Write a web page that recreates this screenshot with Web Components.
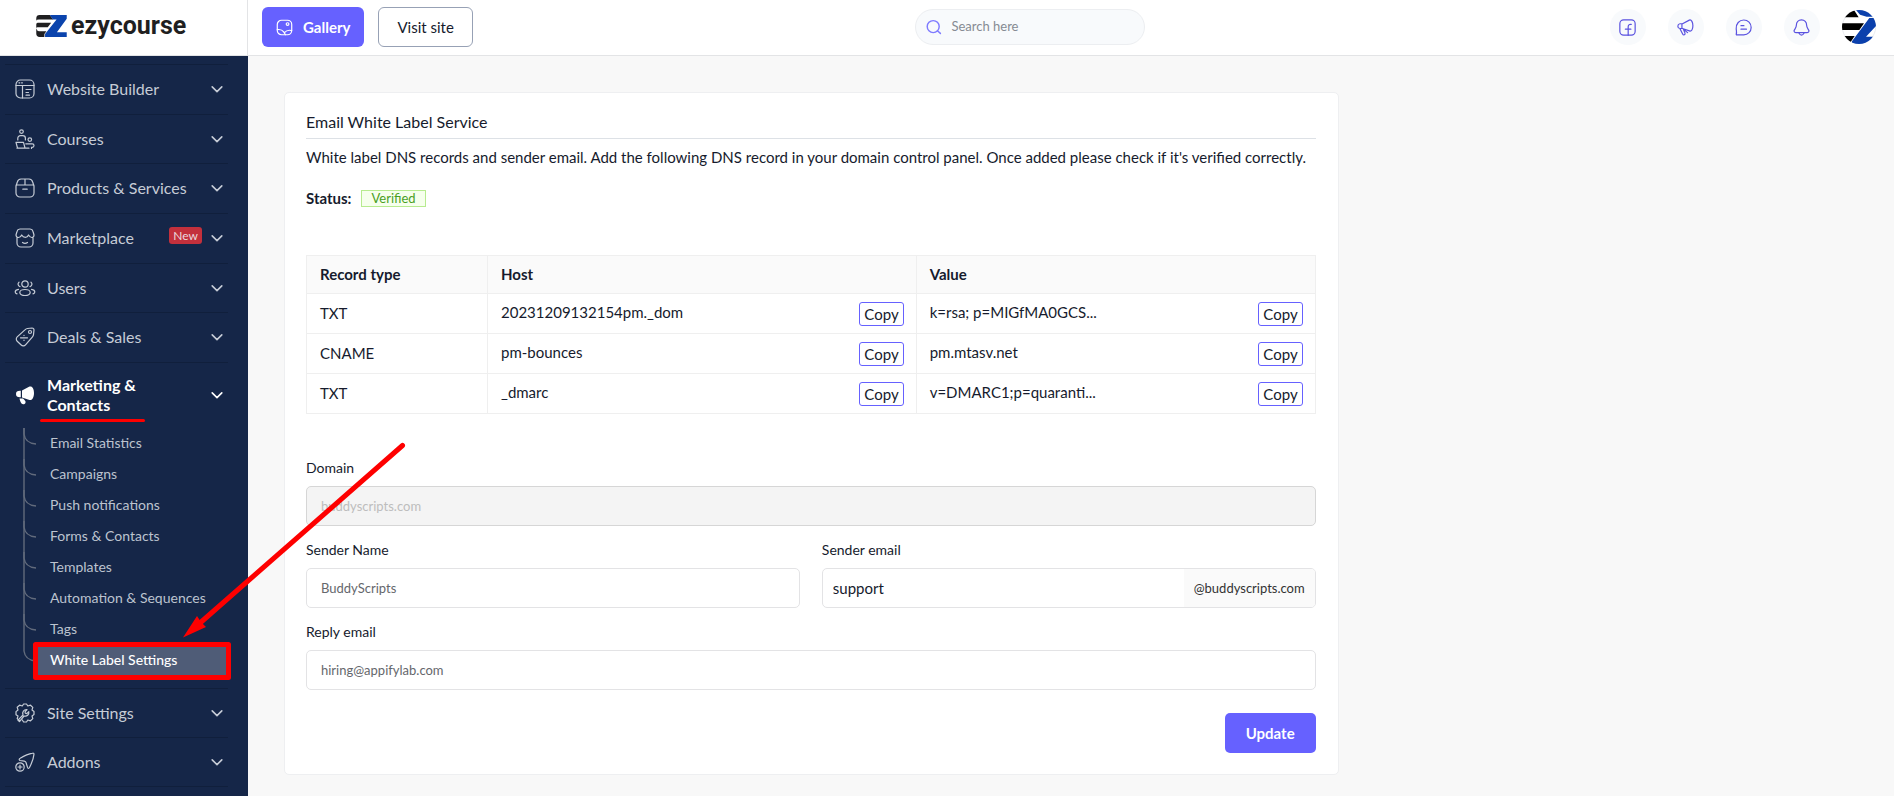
<!DOCTYPE html>
<html lang="en">
<head>
<meta charset="utf-8">
<meta name="viewport" content="width=device-width, initial-scale=1">
<title>Email White Label Service</title>
<style>
  body { margin: 0; font-family: Lato, "Noto Sans", sans-serif; font-size: 15px; line-height: 24px; color: #161b2d; background: #f8f8f8; }
</style>
</head>
<body>
<app-shell>
  <top-bar slot="header"></top-bar>
  <side-nav slot="nav">
    <nav-item slot="top" icon="layout">Website Builder</nav-item>
    <nav-item slot="top" icon="courses">Courses</nav-item>
    <nav-item slot="top" icon="box">Products &amp; Services</nav-item>
    <nav-item slot="top" icon="store" badge="New">Marketplace</nav-item>
    <nav-item slot="top" icon="users">Users</nav-item>
    <nav-item slot="top" icon="tag">Deals &amp; Sales</nav-item>
    <nav-item icon="megaphone" open>Marketing &amp; Contacts
      <sub-link slot="sub">Email Statistics</sub-link>
      <sub-link slot="sub">Campaigns</sub-link>
      <sub-link slot="sub">Push notifications</sub-link>
      <sub-link slot="sub">Forms &amp; Contacts</sub-link>
      <sub-link slot="sub">Templates</sub-link>
      <sub-link slot="sub">Automation &amp; Sequences</sub-link>
      <sub-link slot="sub">Tags</sub-link>
      <sub-link slot="sub" current>White Label Settings</sub-link>
    </nav-item>
    <nav-item icon="gear">Site Settings</nav-item>
    <nav-item icon="addon">Addons</nav-item>
  </side-nav>
  <settings-card>
    <span slot="title">Email White Label Service</span>
    <span slot="intro">White label DNS records and sender email. Add the following DNS record in your domain control panel. Once added please check if it's verified correctly.</span>
    <dns-table></dns-table>
    <sender-form></sender-form>
  </settings-card>
  <tour-marks slot="marks"></tour-marks>
</app-shell>

<script>
const ICONS = {
  layout: '<rect x="1" y="1" width="18" height="18" rx="4.5"/><path d="M1 6.500h18M7.500 6.500V19M11 10.500h5M11 13.500h2.500M11 16.200h3.500M4 3.800h.8M6.600 3.800h.8"/>',
  courses: '<circle cx="6.500" cy="2.600" r="1.800"/><path d="M2.800 11V9.200A2.600 2.600 0 0 1 5.400 6.600h2.400A2.600 2.600 0 0 1 10.400 9.200V11"/><path d="M2.500 19 1 13.400h7.500L10 19M2 19.200h12"/><circle cx="14.800" cy="10.600" r="1.800"/><path d="M10.800 14.800h6.400a1.800 1.800 0 0 1 0 3.600h-.7v1"/>',
  box: '<path d="M1 8.200 2.300 4A4 4 0 0 1 6 1h8a4 4 0 0 1 3.700 3L19 8.200V15a4 4 0 0 1-4 4H5a4 4 0 0 1-4-4zM1 7h18M10 1v6M7.800 11.200h4.400"/>',
  store: '<path d="M2 9v6a4 4 0 0 0 4 4h8a4 4 0 0 0 4-4V9M1 7l1-3.500A3.300 3.300 0 0 1 5 1h10a3.300 3.300 0 0 1 3 2.500L19 7c0 1.500-.8 2.500-2.200 2.500S14.500 8.500 13.500 7c-.5 1.600-1.500 2.300-3 2.300S7.500 8.500 6.700 7C6 8.700 5 9.500 3.600 9.500S1 8.500 1 7zM7.500 14.500q2.500 1.600 5 0"/>',
  users: '<circle cx="10" cy="6" r="3.200"/><ellipse cx="10" cy="14.500" rx="5.200" ry="3"/><path d="M5 8.600A2.500 2.500 0 0 1 4 4.200M15 8.600a2.500 2.500 0 0 0 1-4.400M3.500 11.300C1.500 11.600.2 12.600.2 13.900c0 .9.700 1.600 1.800 2M16.500 11.300c2 .3 3.300 1.300 3.300 2.600 0 .9-.7 1.600-1.800 2"/>',
  tag: '<path d="M12.500 1.500 17 1a2 2 0 0 1 2 2l-.5 4.600a4 4 0 0 1-1 2.200l-7 8a3 3 0 0 1-4.300.2l-4-3.800a3 3 0 0 1 0-4.300l8-7.300a4 4 0 0 1 2.300-1.100z"/><circle cx="15" cy="5" r="1.500"/><path d="M5.500 10.800h7M9 8.300v.3M9 13.200v.3"/>',
  megaphone: '<g fill="currentColor" stroke="none"><path d="M7 5.600 14.500 1.600C16.800.6 19 3.200 19 8s-2.200 8-4.500 6.900L7 12.400z"/><path d="M5.800 5.700C2.500 5.500 1 6.500 1 9s1.500 3.400 4.800 3.200zM4.500 13.500h3.600l2 2.200c.8 1 .6 2.300-.3 3-1 .8-2.500.7-3.300-.3-1.200-1.500-1.600-3-2-4.900z"/></g>',
  gear: '<path d="M4.500 17.800 2.200 15.600 3 13 1 11.700V8.600L3 7 2.200 4.300 4.600 2.200 7.300 3 8.600 1h2.900l1.300 2 2.700-.8 2.300 2.200L17 7l2 1.500v3.100L17 13l.8 2.600-2.300 2.200-2.700-.8-1.300 2H8.600L7.300 17"/><path d="M4.500 18.600 3 17.200l5-5.200c-1-2.800.7-5.600 4-5.300l-2 2.200.4 1.300 1.400.4 2-2c.6 3.200-2 5.200-4.800 4.400z"/>',
  addon: '<circle cx="5" cy="15" r="4.200"/><path d="M5 13v4M3 15h4M5 8.500c-1.200-.7-1-1.600.2-2.200C9 4 13 2 17.600 1.200c1-.2 1.500.4 1.300 1.400C18.500 7 16.500 11.500 14.500 15.500c-.7 1.200-1.600 1-2-.1L11 10.500c-.3-.9-.8-1.200-1.700-1.400z"/>',
  chevron: '<path d="m4 7.300 6 6 6-6"/>',
  gallery: '<rect x="1.500" y="1.500" width="17" height="17" rx="5"/><circle cx="13.600" cy="6" r="1.600"/><path d="M1.500 12.500c3.500-.6 6 .4 7.600 2.700l2 3.300M10 16c2-2.600 4.600-3.300 8.500-2.400"/>',
  search: '<circle cx="9" cy="9.500" r="7.500"/><path d="m14.600 15 3.400 3"/>',
  facebook: '<rect x="1" y="1" width="18" height="18" rx="4.500"/><path d="M10.800 19V9.500c0-2.400 1-3.400 3.600-3.200M7.500 12h6.500"/>',
  horn: '<path d="M6.500 5.500 14.500 1.300C17 .4 18.700 4 18.700 8s-1.700 7.200-4.200 6L6.500 11.200M5.800 5.600H3.400Q1 6 1 8.400t2.400 2.800h2.400zM3.500 11.500 6.800 18c.8 1.400 3.200.6 2.600-1.400L7.500 12l5 4"/>',
  chat: '<path d="M2.500 18.500c-.8.400-1.300 0-1-.9.700-2 .1-3.800-.1-6C1 5.500 5 1.200 10.300 1.200c5 0 8.700 3.800 8.700 8.700s-3.700 8.700-8.700 8.700H3.500zM7 7.800h3.500M7 12h6.500"/>',
  bell: '<path d="M10 1C6.300 1 4 3.700 4 7.200c0 4-2.800 4.800-2.800 7C1.200 15.600 2 16 3.300 16h13.400c1.300 0 2.100-.4 2.100-1.800 0-2.200-2.800-3-2.800-7C16 3.700 13.700 1 10 1zM6.800 16.500q3.200 5 6.400 0"/>'
};

function define(name, html, setup) {
  const template = document.createElement('template');
  template.innerHTML = html;
  customElements.define(name, class extends HTMLElement {
    connectedCallback() {
      if (this.shadowRoot) return;
      const content = template.content.cloneNode(true);
      if (setup) setup(this, content);
      this.attachShadow({ mode: 'open' }).append(content);
    }
  });
}

define('ui-icon', `
<style>
  :host { display: block; flex: none; width: var(--size, 20px); height: var(--size, 20px); }
  svg { display: block; width: 100%; height: 100%; overflow: visible; fill: none; stroke: currentColor; stroke-width: var(--stroke, 1.2); stroke-linecap: round; stroke-linejoin: round; }
</style>
<svg viewBox="0 0 20 20" aria-hidden="true"></svg>`,
(el, root) => { root.querySelector('svg').innerHTML = ICONS[el.getAttribute('name')]; });

define('app-shell', `
<style>
  :host { display: grid; position: relative; grid-template: auto 1fr / 248px minmax(0, 1fr); min-height: 100vh; }
  header { grid-column: 1 / -1; }
  aside { display: grid; background: #152648; }
  main { display: grid; grid-template-columns: minmax(0, 2fr) minmax(0, 1fr); align-items: start; padding: 36px 28px 21px 36px; }
</style>
<header><slot name="header"></slot></header>
<aside><slot name="nav"></slot></aside>
<main><slot></slot></main>
<slot name="marks"></slot>`);

define('brand-logo', `
<style>
  :host { display: block; }
  a { display: flex; align-items: center; gap: 4px; color: #1f1f21; font: 700 25px/32px Roboto, sans-serif; text-decoration: none; }
  svg { width: 31px; height: 22px; }
</style>
<a href="#">
  <svg viewBox="0 0 90 65" aria-hidden="true">
    <path fill="#1f1f21" d="M0 10Q0 0 10 0h30l10 13H8q-8 0-8 4zM4 23h40l-10 13H4q-4 0-4 4V28q0-5 4-5zM0 40q2 8 10 8h20l-6 8v9H10Q0 65 0 55z"/>
    <path fill="#0b44ad" d="M40 0h50v11L61 51h29v14H26v-9l34-43H49z"/>
  </svg>
  <span>ezycourse</span>
</a>`);

define('top-bar', `
<style>
  :host { display: flex; box-sizing: border-box; height: 56px; background: #fff; border-bottom: 1px solid #e3e4e6; }
  brand-logo { box-sizing: border-box; width: 248px; padding: 10px 0 0 36px; border-right: 1px solid #e3e4e6; }
  .tools { flex: 1; display: flex; align-items: center; padding: 0 18px 1px 14px; }
  .left { display: flex; gap: 14px; }
  button { font: inherit; cursor: pointer; }
  .gallery, .visit { box-sizing: border-box; display: flex; align-items: center; height: 40px; padding-bottom: 2px; border-radius: 6px; font-size: 15px; }
  .gallery { gap: 10px; padding: 0 14px; color: #fff; font-weight: 700; background: #6661ff; border: 0; --size: 17px; --stroke: 1.4; }
  .visit { padding: 0 18px; color: #161b2d; border: 1px solid #97a1b5; text-decoration: none; }
  .search { box-sizing: border-box; display: flex; align-items: center; gap: 9px; width: 230px; height: 36px; margin: 0 auto; padding: 0 10px; background: #f8fafc; border: 1px solid #eceef1; border-radius: 18px; color: #7f7bff; --size: 16px; --stroke: 1.8; }
  input { flex: 1; min-width: 0; padding: 0 0 2px; border: 0; background: none; font: 13px/20px Lato, sans-serif; color: #161b2d; outline: 0; }
  input::placeholder { color: #868b93; opacity: 1; }
  .right { display: flex; align-items: center; gap: 22px; padding-left: 22px; }
  .round { display: grid; place-items: center; width: 36px; height: 36px; padding: 0; border: 0; border-radius: 50%; background: #f8fafc; color: #5a52e0; --size: 17px; --stroke: 1.4; }
  .avatar { width: 34px; height: 34px; padding: 0; border: 0; background: none; }
  .avatar svg { display: block; }
</style>
<brand-logo></brand-logo>
<div class="tools">
  <div class="left">
    <button class="gallery"><ui-icon name="gallery"></ui-icon>Gallery</button>
    <a class="visit" href="#">Visit site</a>
  </div>
  <label class="search"><ui-icon name="search"></ui-icon><input type="search" placeholder="Search here" aria-label="Search"></label>
  <div class="right">
    <button class="round" aria-label="Facebook"><ui-icon name="facebook"></ui-icon></button>
    <button class="round" aria-label="Announcements"><ui-icon name="horn"></ui-icon></button>
    <button class="round" aria-label="Messages"><ui-icon name="chat"></ui-icon></button>
    <button class="round" aria-label="Notifications"><ui-icon name="bell"></ui-icon></button>
    <button class="avatar" aria-label="Account">
      <svg width="34" height="34" viewBox="0 0 102 102">
        <clipPath id="c"><circle cx="51" cy="51" r="51"/></clipPath>
        <circle cx="51" cy="51" r="50" fill="#fff" stroke="#dfe3ea" stroke-width="2"/>
        <g clip-path="url(#c)">
          <path d="M0 0h36l14 22H0zM0 40h66L52 60H0zM0 78h38L26 96v6H0z"/>
          <path fill="#0b40ac" d="M42 0h60v20H74L54 14zM82 24h20v24L72 80h30v22H30V94z"/>
        </g>
      </svg>
    </button>
  </div>
</div>`);

define('side-nav', `
<style>
  :host { display: block; padding: 8px 20px 0 5px; }
  .top { display: grid; grid-auto-rows: 1fr; height: 298px; }
  .end { border-bottom: 1px solid #101f3c; }
</style>
<nav>
  <div class="top"><slot name="top"></slot></div>
  <div class="end"><slot></slot></div>
</nav>`);

define('nav-item', `
<style>
  :host { display: block; box-sizing: border-box; min-height: 49px; border-top: 1px solid #101f3c; color: #c6ccd6; }
  button { box-sizing: border-box; display: flex; align-items: center; width: 100%; min-height: 48px; padding: 0 3px 0 10px; border: 0; background: none; color: inherit; font: 16px/20px Lato, sans-serif; text-align: left; cursor: pointer; --stroke: 1.2; }
  .text { flex: 1; margin-left: 12px; }
  .badge { margin: -6px 7px 0 0; padding: 0 4px; border-radius: 3px; background: #c3303c; color: #ead9de; font-size: 12px; line-height: 17px; }
  .chev { --size: 16px; --stroke: 2; }
  ul { margin: 0; padding: 0 2px 12px 13px; list-style: none; display: none; }
  :host([open]) { color: #fff; font-weight: 700; }
  :host([open]) button { min-height: 65px; padding-bottom: 2px; font-weight: 700; }
  :host([open]) .text { padding-right: 60px; }
  :host([open]) ul { display: block; }
</style>
<button><ui-icon class="icon"></ui-icon><span class="text"><slot></slot></span><ui-icon class="chev" name="chevron"></ui-icon></button>
<ul><slot name="sub"></slot></ul>`,
(el, root) => {
  root.querySelector('.icon').setAttribute('name', el.getAttribute('icon'));
  if (el.hasAttribute('badge')) {
    const badge = document.createElement('span');
    badge.className = 'badge';
    badge.textContent = el.getAttribute('badge');
    root.querySelector('.chev').before(badge);
  }
});

define('sub-link', `
<style>
  :host { display: flex; height: 31px; }
  svg { flex: none; width: 20px; height: 31px; fill: none; stroke: #626b7c; stroke-width: 1.4; overflow: visible; }
  a { flex: 1; padding-left: 12px; color: #bcc3cf; font-size: 14px; font-weight: 400; line-height: 30px; text-decoration: none; }
  :host([current]) a { color: #fff; background: #4f5c77; font-weight: 500; }
  :host([current]) .through { display: none; }
</style>
<svg viewBox="0 0 20 31" aria-hidden="true"><path class="through" d="M6 0v31"/><path d="M6 0v6q1 9 12 10"/></svg>
<a href="#"><slot></slot></a>`,
(el) => { el.setAttribute('role', 'listitem'); });

define('settings-card', `
<style>
  :host { display: block; padding: 17px 22px 21px 21px; background: #fff; border: 1px solid #eeeff1; border-radius: 5px; }
  h1 { margin: 0; padding-bottom: 4px; border-bottom: 1px solid #dde1e6; font-size: 16px; font-weight: 400; line-height: 24px; }
  p { margin: 6px 0 17px; }
  .status { display: flex; align-items: center; gap: 10px; margin-bottom: 45px; }
  .verified { padding: 0 9px; border: 1px solid #b7eb8f; background: #f6ffed; color: #4aa01f; font-size: 13px; line-height: 15px; }
</style>
<h1><slot name="title"></slot></h1>
<p><slot name="intro"></slot></p>
<div class="status"><strong>Status:</strong><span class="verified">Verified</span></div>
<slot></slot>`);

define('dns-table', `
<style>
  :host { display: block; }
  table { width: 100%; table-layout: fixed; border-collapse: collapse; }
  th, td { box-sizing: border-box; height: 40px; padding: 0 12px 2px 13px; border: 1px solid #efefef; text-align: left; font-weight: 400; }
  th { height: 38px; background: #fafafa; font-weight: 700; }
  col.type { width: 181px; } col.value { width: 399px; }
  .cell { display: flex; align-items: center; justify-content: space-between; margin-top: 2px; }
  .cell span { padding-bottom: 4px; white-space: nowrap; }
  button { box-sizing: border-box; height: 24px; padding: 0 4px; border: 1px solid #6661ff; border-radius: 3px; background: #fff; color: #161b2d; font: 15px/20px Lato, sans-serif; cursor: pointer; }
</style>
<table>
  <colgroup><col class="type"><col><col class="value"></colgroup>
  <thead><tr><th>Record type</th><th>Host</th><th>Value</th></tr></thead>
  <tbody></tbody>
</table>`,
(el, root) => {
  const rows = [
    ['TXT', '20231209132154pm._dom', 'k=rsa; p=MIGfMA0GCS...'],
    ['CNAME', 'pm-bounces', 'pm.mtasv.net'],
    ['TXT', '_dmarc', 'v=DMARC1;p=quaranti...']
  ];
  const cell = text => `<td><div class="cell"><span>${text}</span><button>Copy</button></div></td>`;
  root.querySelector('tbody').innerHTML = rows.map(([type, host, value]) => `<tr><td>${type}</td>${cell(host)}${cell(value)}</tr>`).join('');
});

define('text-field', `
<style>
  :host { display: block; }
  label { display: block; margin-bottom: 6px; font-size: 14px; line-height: 24px; }
  .box { box-sizing: border-box; display: flex; height: 40px; border: 1px solid #e3e3e5; border-radius: 5px; overflow: hidden; background: #fff; }
  input { flex: 1; min-width: 0; padding: 0 14px; border: 0; background: none; color: #65676c; font: 13px/20px Lato, sans-serif; outline: 0; }
  .suffix { display: none; padding: 0 10px; background: #fafafa; color: #333; font-size: 13px; line-height: 38px; }
  :host([suffix]) input { padding: 0 10px; color: #161b2d; font-size: 15px; }
  :host([suffix]) .suffix { display: block; }
  :host([disabled]) .box { background: #f4f4f4; border-color: #d6d6d6; }
  :host([disabled]) input { color: #bdbdbd; }
</style>
<label for="field"></label>
<div class="box"><input id="field"><span class="suffix"></span></div>`,
(el, root) => {
  const input = root.querySelector('input');
  root.querySelector('label').textContent = el.getAttribute('label');
  input.value = el.getAttribute('value');
  input.disabled = el.hasAttribute('disabled');
  root.querySelector('.suffix').textContent = el.getAttribute('suffix') || '';
});

define('sender-form', `
<style>
  :host { display: block; margin-top: 42px; }
  form { display: grid; grid-template-columns: 1fr 1fr; gap: 12px 22px; }
  .wide { grid-column: 1 / -1; }
  button { grid-column: 2; justify-self: end; height: 40px; margin-top: 11px; padding: 0 21px; border: 0; border-radius: 5px; background: #6661ff; color: #fff; font: 700 15px/24px Lato, sans-serif; cursor: pointer; }
</style>
<form>
  <text-field class="wide" label="Domain" value="buddyscripts.com" disabled></text-field>
  <text-field label="Sender Name" value="BuddyScripts"></text-field>
  <text-field label="Sender email" value="support" suffix="@buddyscripts.com"></text-field>
  <text-field class="wide" label="Reply email" value="hiring@appifylab.com"></text-field>
  <button type="button">Update</button>
</form>`);

/* Hand-drawn red marks laid over the page: underline, arrow and frame */
define('tour-marks', `
<style>
  :host { position: absolute; top: 0; left: 0; pointer-events: none; }
  svg { display: block; fill: none; stroke: #fe0000; stroke-linecap: round; stroke-linejoin: round; }
</style>
<svg width="420" height="700" viewBox="0 0 420 700" aria-hidden="true">
  <path stroke-width="3" d="M41.500 420.500h102"/>
  <path stroke-width="5" d="M402.500 445.500 200 623M35.500 644.500h193v33h-193z"/>
  <path fill="#fe0000" stroke="none" d="m183 637.500 14-21.500 4 6 5 5z"/>
</svg>`);
</script>
</body>
</html>
